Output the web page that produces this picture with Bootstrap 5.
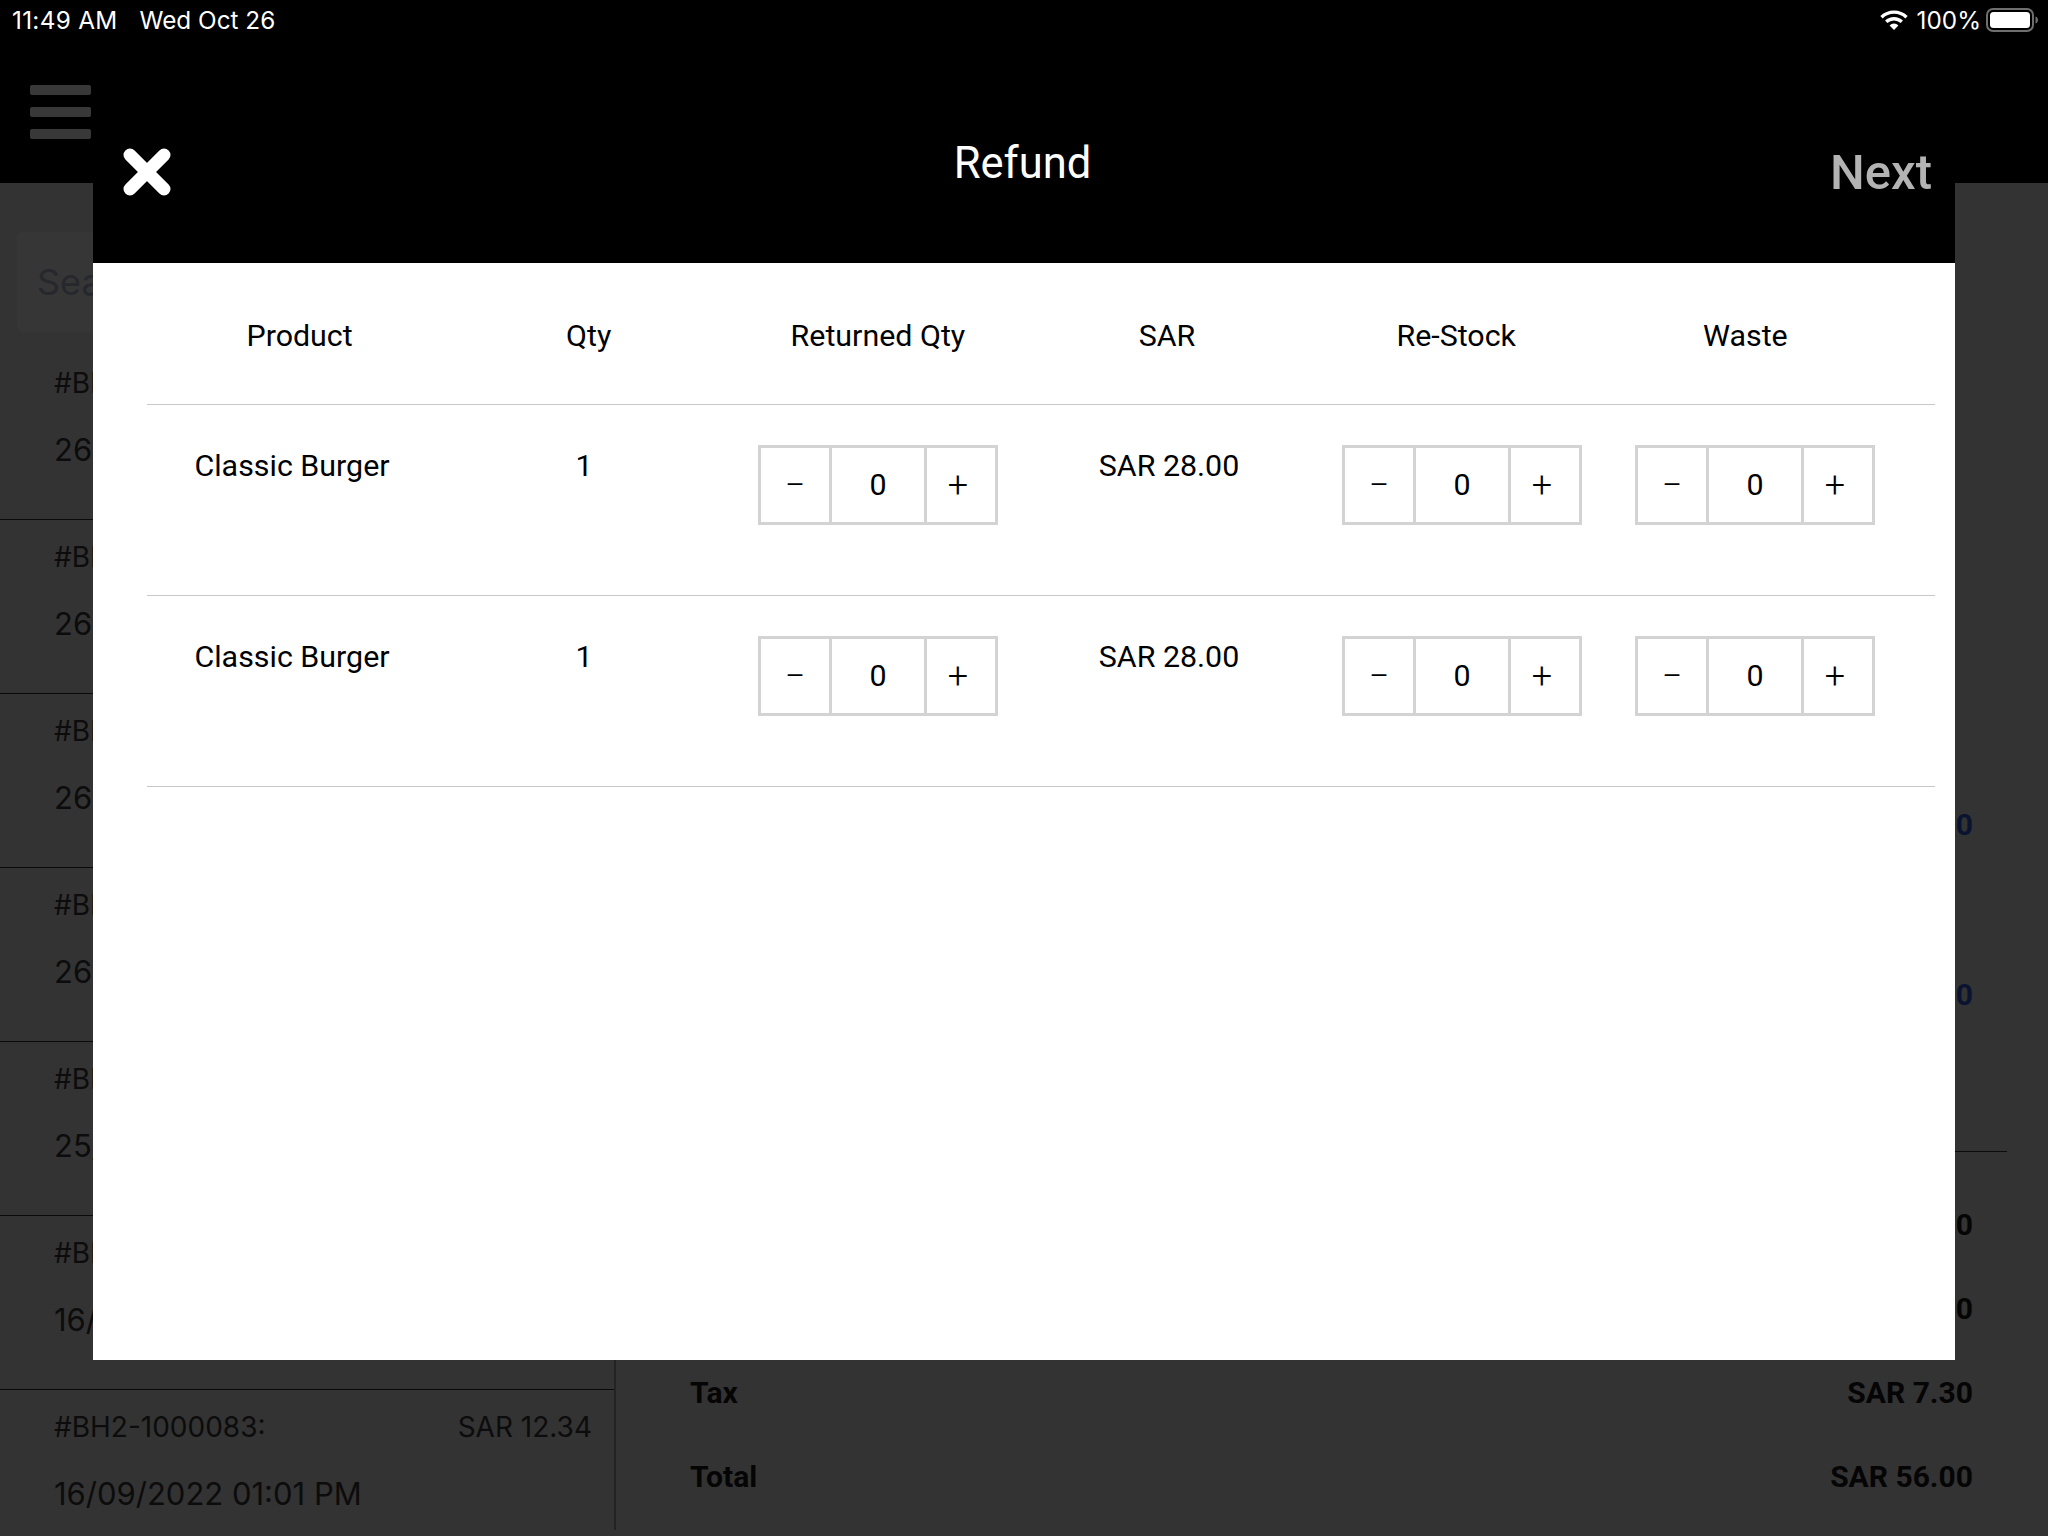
<!DOCTYPE html>
<html lang="en">
<head>
<meta charset="utf-8">
<title>Refund</title>
<link href="https://cdn.jsdelivr.net/npm/bootstrap@5.3.0/dist/css/bootstrap.min.css" rel="stylesheet">
<style>
html,body{height:100%}
body{background:#333;font-family:Roboto,"Liberation Sans",sans-serif;color:#000;overflow:hidden}
.stage{height:1536px;position:relative}
.topbar{height:183px;background:#000;flex:none}
.statusline{height:30px;margin-top:5px;padding:0 8px 0 12px;color:#fff;font:24.3px/30px Inter,sans-serif}
.statusline .clock{margin-right:22px;letter-spacing:.3px}
.wifimark{margin-right:9px}
.batterymark{margin-left:5px}
.burger{width:61px;margin:50px 0 0 30px;gap:12px}
.burger i{display:block;height:10px;border-radius:2px;background:#383838}
.leftpane{width:616px;height:1347px;border-right:2px solid #232323;flex:none;font-family:Inter,sans-serif;color:#0c0c0c}
.searchbox{height:100px;margin:49px 0 0 17px;background:#363636;font-size:36px;line-height:100px;padding-left:20px;color:#26282d;border-radius:5px}
.orderrow{height:174px;border-bottom:1px solid #0a0a0a;padding:16px 22px 0 54px;font-size:28px}
.firstrow{height:188px;padding-top:30px}
.orderdate{font-size:31px;margin-top:23px}
.rightpane{padding:556px 41px 0 74px;font-weight:700;font-size:30px;color:#050505;background:#333}
.sumrow{height:84px;padding-right:34px}
.sumtall{height:170px}
.navyvalue{color:#0a1430}
.sumrule{height:73px;border-bottom:1px solid #0c0c0c;margin-bottom:30px}
.modalbox{position:absolute;left:93px;top:100px;width:1862px;height:1260px;border:0;border-radius:0;background:#fff}
.modalhead{height:163px;background:#000;color:#fff;padding:0 23px 0 30px;border:0;border-radius:0}
.headside{flex:1 1 0}
.closemark{width:48px;height:48px;margin-top:48px;display:block}
.modaltitle{font-size:43.5px;font-weight:400;line-height:52px;margin:38px 10px 0 0}
.nextlabel{font:500 49px/66px Roboto,sans-serif;color:#b3b3b3;margin-top:40px;text-align:right}
.refundtable{margin:0 20px 0 54px}
.headrow{height:142px;padding:4px 45px 0 8px;border-bottom:1px solid #c8c8c8;font-size:30.4px}
.itemrow{display:grid;grid-template-columns:274px 310px 278px 304px 282px 304px;height:191px;padding-left:8px;padding-top:40px;border-bottom:1px solid #c8c8c8;font-size:30.4px;align-items:start;text-align:center}
.itemtext{line-height:42px}
.stepper{width:240px;height:80px;margin:0 auto;border:3px solid #d3d3d3;font-size:30.4px}
.stepper .btn{border:0;border-radius:0;padding:0;font-size:36px;font-weight:300;color:#000;background:#fff;width:68px;line-height:1}
.stepper .btnplus{padding-right:6px}
.stepper .stepval{flex:1;border-left:3px solid #d3d3d3;border-right:3px solid #d3d3d3;text-align:center;line-height:74px}
</style>
</head>
<body>
<div class="stage d-flex flex-column">
  <header class="topbar">
    <div class="statusline d-flex justify-content-between align-items-center">
      <div><span class="clock">11:49 AM</span><span>Wed Oct 26</span></div>
      <div class="d-flex align-items-center">
        <svg width="28" height="22" viewBox="0 0 28 22" class="wifimark"><path d="M1.500 8.200a18 18 0 0 1 25 0" fill="none" stroke="#fff" stroke-width="3.400"/><path d="M6.200 12.800a11.400 11.400 0 0 1 15.600 0" fill="none" stroke="#fff" stroke-width="3.400"/><path d="M14 21l-4.400-4.600a6.200 6.200 0 0 1 8.800 0z" fill="#fff"/></svg>
        <span>100%</span>
        <svg width="54" height="24" viewBox="0 0 54 24" class="batterymark"><rect x="1" y="1" width="46" height="22" rx="6" fill="none" stroke="#6f6f6f" stroke-width="2"/><rect x="4" y="4" width="40" height="16" rx="3.500" fill="#fff"/><path d="M49.500 8.500c2 .6 2.500 2 2.500 3.500s-.5 2.900-2.500 3.500z" fill="#6f6f6f"/></svg>
      </div>
    </div>
    <div class="burger d-flex flex-column"><i></i><i></i><i></i></div>
  </header>
  <main class="d-flex flex-grow-1">
    <aside class="leftpane">
      <div class="searchbox">Search</div>
      <div>
        <div class="orderrow firstrow"><div>#BH</div><div class="orderdate">26/</div></div>
        <div class="orderrow"><div>#BH</div><div class="orderdate">26/</div></div>
        <div class="orderrow"><div>#BH</div><div class="orderdate">26/</div></div>
        <div class="orderrow"><div>#BH</div><div class="orderdate">26/</div></div>
        <div class="orderrow"><div>#BH</div><div class="orderdate">25/</div></div>
        <div class="orderrow"><div>#BH</div><div class="orderdate">16/</div></div>
        <div class="orderrow border-0"><div class="d-flex justify-content-between"><span>#BH2-1000083:</span><span>SAR 12.34</span></div><div class="orderdate">16/09/2022 01:01 PM</div></div>
      </div>
    </aside>
    <section class="rightpane flex-grow-1">
      <div class="sumrow sumtall d-flex justify-content-end align-items-center navyvalue"><span>0</span></div>
      <div class="sumrow sumtall d-flex justify-content-end align-items-center navyvalue"><span>0</span></div>
      <div class="sumrule"></div>
      <div class="sumrow d-flex justify-content-end align-items-center"><span>0</span></div>
      <div class="sumrow d-flex justify-content-end align-items-center"><span>0</span></div>
      <div class="sumrow d-flex justify-content-between align-items-center"><span>Tax</span><span>SAR 7.30</span></div>
      <div class="sumrow d-flex justify-content-between align-items-center"><span>Total</span><span>SAR 56.00</span></div>
    </section>
  </main>

  <div class="modal-content modalbox">
    <div class="modalhead d-flex justify-content-between align-items-start">
      <div class="headside"><svg class="closemark" viewBox="0 0 48 48"><path d="M7 7L41 41M41 7L7 41" stroke="#fff" stroke-width="13" stroke-linecap="round"/></svg></div>
      <h5 class="modaltitle">Refund</h5>
      <div class="headside nextlabel">Next</div>
    </div>
    <div class="refundtable">
      <div class="row g-0 headrow align-items-center text-center">
        <div class="col-2">Product</div><div class="col-2">Qty</div><div class="col-2">Returned Qty</div><div class="col-2">SAR</div><div class="col-2">Re-Stock</div><div class="col-2">Waste</div>
      </div>
      <div class="itemrow">
        <div class="itemtext">Classic Burger</div><div class="itemtext">1</div>
        <div class="stepper d-flex"><button class="btn">−</button><div class="stepval">0</div><button class="btn btnplus">+</button></div>
        <div class="itemtext">SAR 28.00</div>
        <div class="stepper d-flex"><button class="btn">−</button><div class="stepval">0</div><button class="btn btnplus">+</button></div>
        <div class="stepper d-flex"><button class="btn">−</button><div class="stepval">0</div><button class="btn btnplus">+</button></div>
      </div>
      <div class="itemrow">
        <div class="itemtext">Classic Burger</div><div class="itemtext">1</div>
        <div class="stepper d-flex"><button class="btn">−</button><div class="stepval">0</div><button class="btn btnplus">+</button></div>
        <div class="itemtext">SAR 28.00</div>
        <div class="stepper d-flex"><button class="btn">−</button><div class="stepval">0</div><button class="btn btnplus">+</button></div>
        <div class="stepper d-flex"><button class="btn">−</button><div class="stepval">0</div><button class="btn btnplus">+</button></div>
      </div>
    </div>
  </div>
</div>
</body>
</html>
